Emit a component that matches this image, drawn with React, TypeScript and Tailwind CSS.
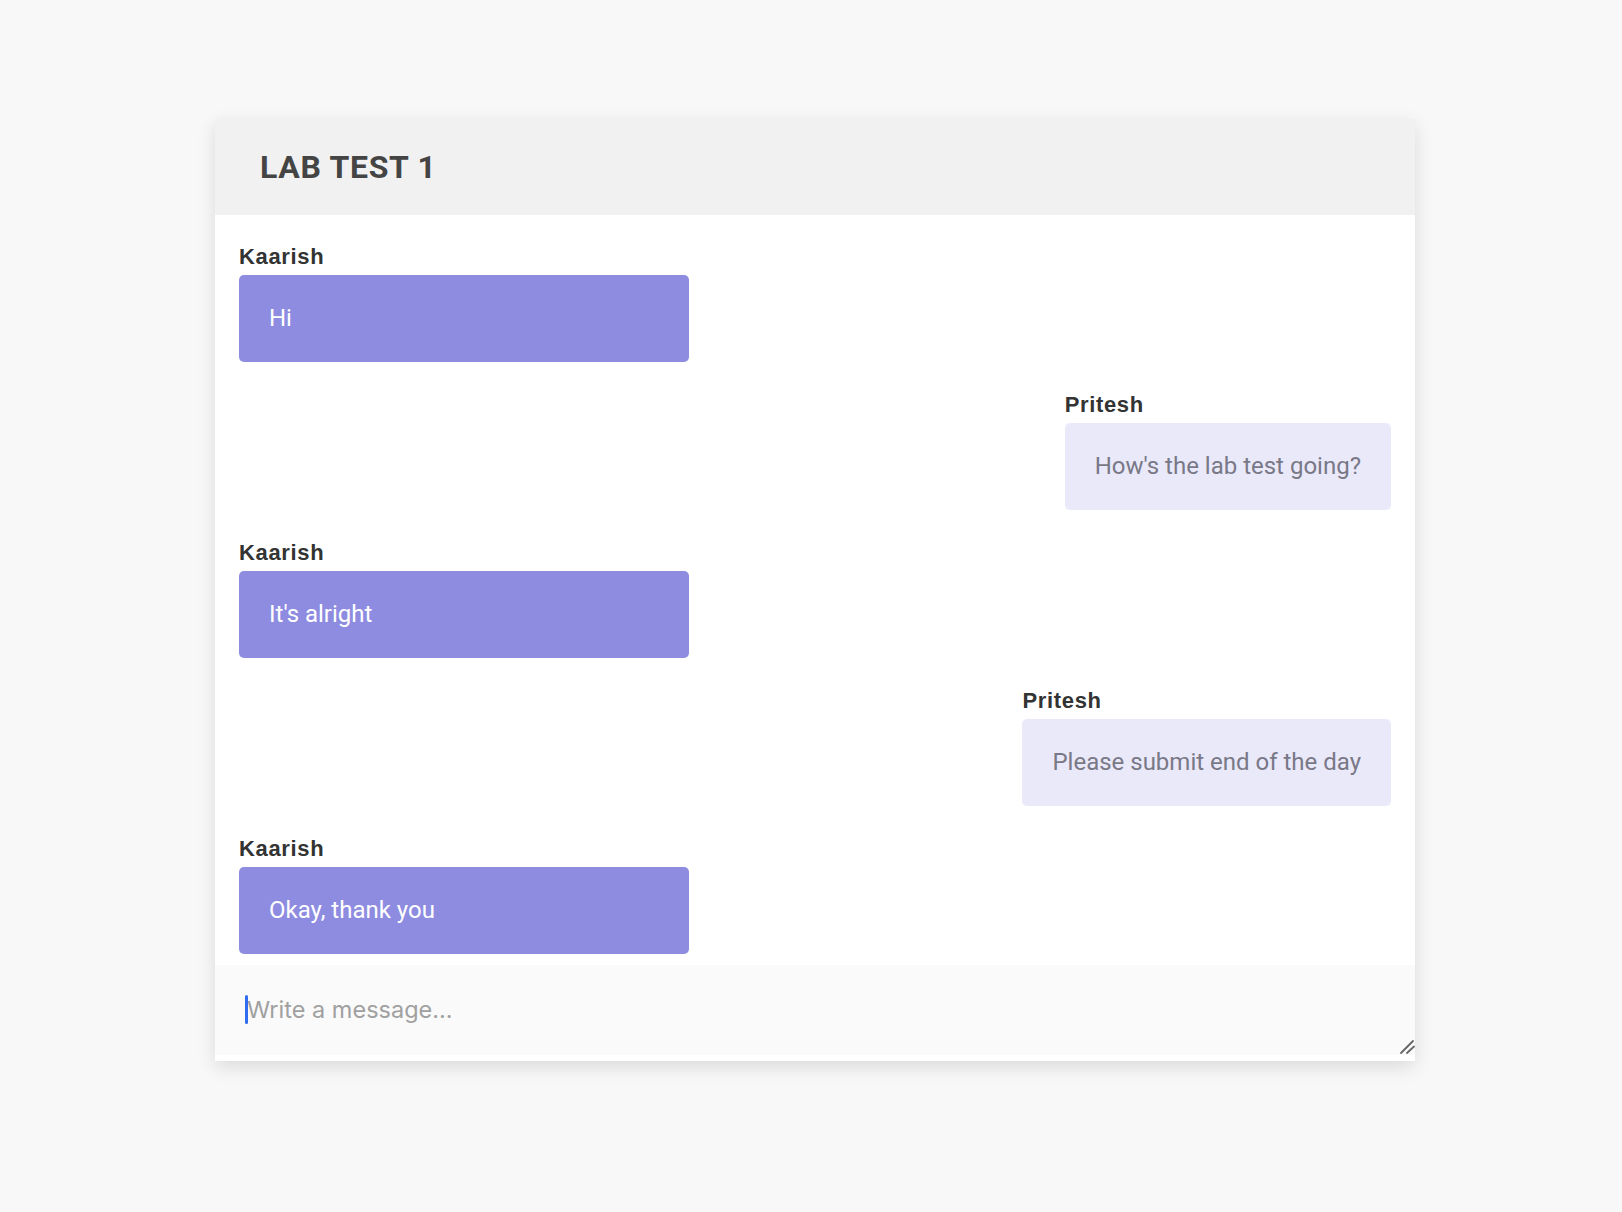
import React from 'react';

type Message = {
  author: string;
  text: string;
  mine: boolean;
};

const messages: Message[] = [
  { author: 'Kaarish', text: 'Hi', mine: true },
  { author: 'Pritesh', text: "How's the lab test going?", mine: false },
  { author: 'Kaarish', text: "It's alright", mine: true },
  { author: 'Pritesh', text: 'Please submit end of the day', mine: false },
  { author: 'Kaarish', text: 'Okay, thank you', mine: true },
];

const App = () => {
  return (
    <div className="min-h-screen bg-[#f8f8f8] pt-[119px] pb-[151px] pl-2">
      <div className="mx-auto w-[1200px] bg-white shadow-[0_6px_18px_rgba(0,0,0,0.12)]">
        {/* Header */}
        <div className="h-[96px] bg-[#f1f1f1] pl-[45px] flex items-center">
          <h1 className="font-['Roboto',sans-serif] text-[32px] font-bold tracking-[0.7px] text-[#444444] leading-none">
            LAB TEST 1
          </h1>
        </div>

        {/* Messages */}
        <div className="flex flex-col gap-[30px] px-[24px] pt-[29px] pb-[11px]">
          {messages.map((m, i) => (
            <div key={i} className="w-full flex">
              <div className={m.mine ? 'flex flex-col' : 'ml-auto flex flex-col'}>
                <span className="font-['Liberation_Sans',Arial,sans-serif] text-[22px] font-bold leading-[25px] tracking-[0.03em] text-[#333333] mb-[6px]">
                  {m.author}
                </span>
                <div
                  className={
                    m.mine
                      ? 'w-[450px] rounded-[5px] bg-[#8e8ce1] px-[30px] py-[30px] font-["Roboto",sans-serif] text-[24px] leading-[27px] text-white'
                      : 'rounded-[5px] bg-[#e9e9fa] px-[30px] py-[30px] font-["Roboto",sans-serif] text-[24px] leading-[27px] text-[#797886]'
                  }
                >
                  {m.text}
                </div>
              </div>
            </div>
          ))}
        </div>

        {/* Composer */}
        <div className="relative pb-[6px]">
          <textarea
            placeholder="Write a message..."
            className="block h-[90px] w-full resize-none bg-[#fafafa] pl-[32px] pr-4 pt-[30px] font-['Inter',sans-serif] text-[23.5px] leading-[29px] text-[#333333] placeholder:text-[#a0a0a0] outline-none"
          />
          <span className="pointer-events-none absolute left-[30px] top-[30px] h-[29px] w-[3px] rounded-full bg-[#2f6cf0]" />
          <svg
            className="pointer-events-none absolute right-0 bottom-[6px] h-4 w-4"
            viewBox="0 0 16 16"
          >
            <line x1="2" y1="14" x2="14" y2="2" stroke="#666666" strokeWidth="1.8" strokeLinecap="round" />
            <line x1="8" y1="14" x2="15" y2="7.5" stroke="#666666" strokeWidth="1.8" strokeLinecap="round" />
          </svg>
        </div>
      </div>
    </div>
  );
};

export default App;
